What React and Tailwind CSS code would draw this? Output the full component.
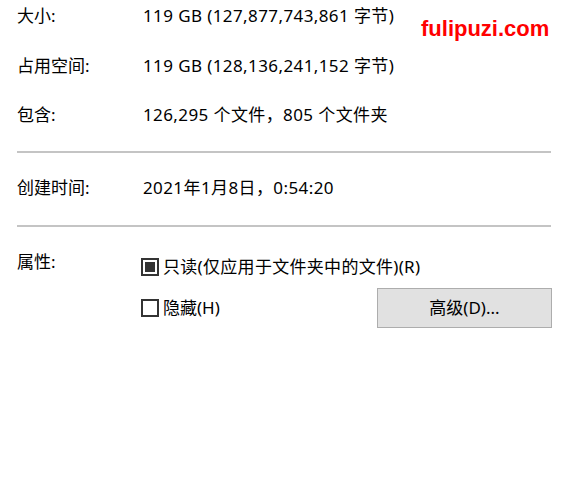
const font = { fontFamily: '"Noto Sans", "Noto Sans CJK SC", sans-serif' };

function Row({ label, value, className = "" }) {
  return (
    <div className={`flex h-5 items-center leading-5 ${className}`}>
      <span className="w-[126px] shrink-0">{label}</span>
      <span className="tracking-[0.4px]">{value}</span>
    </div>
  );
}

function Checkbox({ checked }) {
  return (
    <span className="flex h-[18px] w-[18px] shrink-0 items-center justify-center border-2 border-[#333333] bg-white">
      {checked && <span className="h-[10px] w-[10px] bg-[#333333]" />}
    </span>
  );
}

export default function App() {
  return (
    <div
      className="relative h-[500px] w-[572px] bg-white px-[17px] text-[17px] text-black"
      style={font}
    >
      <div className="absolute left-[421px] top-[11px] text-[22px] font-bold leading-6 text-[#ff0000] [font-family:'Liberation_Sans',Arial,sans-serif]">
        fulipuzi.com
      </div>

      <Row className="mt-[6px]" label="大小:" value="119 GB (127,877,743,861 字节)" />
      <Row className="mt-[30px]" label="占用空间:" value="119 GB (128,136,241,152 字节)" />
      <Row className="mt-[29px]" label="包含:" value="126,295 个文件，805 个文件夹" />

      <div className="mt-[26px] h-[2px] w-[534px] bg-[#c4c4c4]" />

      <Row className="mt-[25px]" label="创建时间:" value="2021年1月8日，0:54:20" />

      <div className="mt-[27px] h-[2px] w-[534px] bg-[#c4c4c4]" />

      <div className="mt-[25px] flex items-start">
        <span className="w-[124px] shrink-0 leading-5">属性:</span>
        <div className="flex w-[411px] flex-col pt-[5px]">
          <label className="flex h-5 items-center gap-1 leading-5">
            <Checkbox checked />
            <span className="tracking-[0.3px]">只读(仅应用于文件夹中的文件)(R)</span>
          </label>
          <div className="mt-[11px] flex h-10 items-center justify-between">
            <label className="flex items-center gap-1 leading-5">
              <Checkbox />
              <span>隐藏(H)</span>
            </label>
            <button className="h-10 w-[175px] border border-[#adadad] bg-[#e1e1e1] text-[17px] leading-5 text-black">
              高级(D)...
            </button>
          </div>
        </div>
      </div>
    </div>
  );
}
